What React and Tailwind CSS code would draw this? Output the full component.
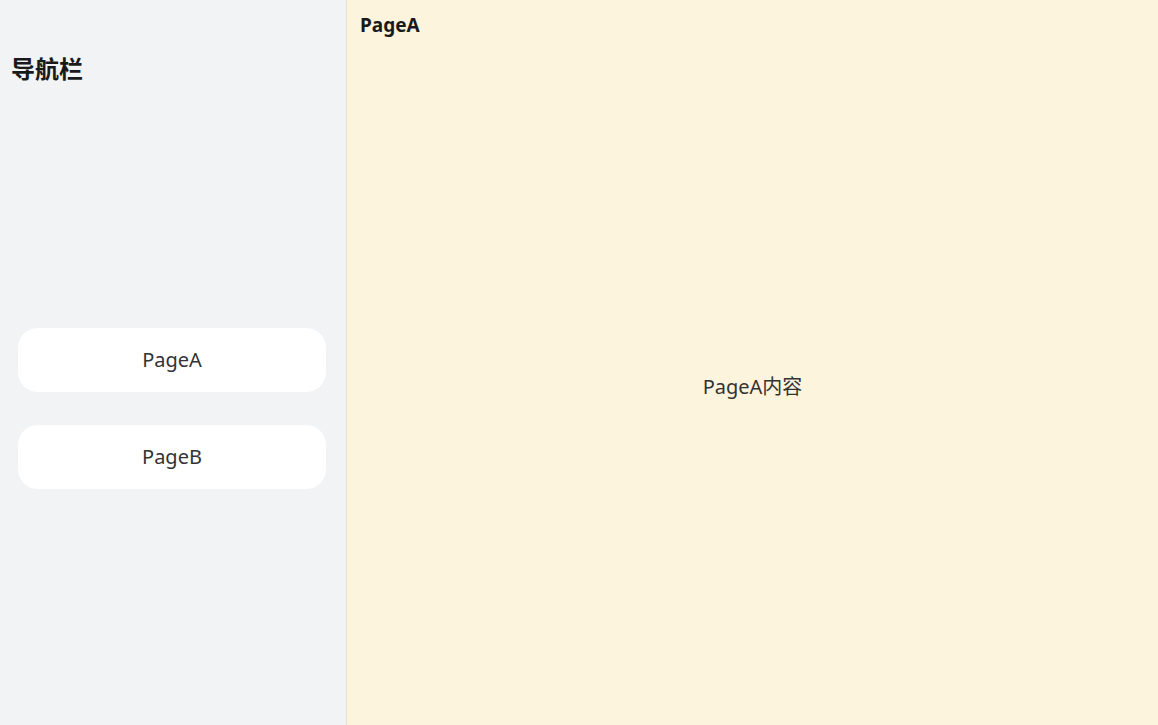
export default function App() {
  const font = { fontFamily: '"Noto Sans", "Noto Sans CJK SC", sans-serif' };
  return (
    <div className="flex h-[725px] w-[1158px] overflow-hidden" style={font}>
      <aside className="flex w-[347px] shrink-0 flex-col border-r border-[#e6e2d6] bg-[#f1f3f5]">
        <div className="h-[92px] px-[11px] pt-[55px]">
          <h1 className="text-[24px] font-bold leading-[28px] text-[#1a1a1a]">导航栏</h1>
        </div>
        <div className="flex flex-1 flex-col justify-center gap-[33px] px-[18px] pr-[20px]">
          <button className="h-[64px] rounded-[20px] bg-white text-[20px] text-[#333333]">PageA</button>
          <button className="h-[64px] rounded-[20px] bg-white text-[20px] text-[#333333]">PageB</button>
        </div>
      </aside>
      <main className="flex flex-1 flex-col bg-[#fdf4de]">
        <div className="h-[48px] px-[13px] pt-[12px]">
          <h2 className="text-[19px] font-bold leading-[26px] text-[#1a1a1a]">PageA</h2>
        </div>
        <div className="flex flex-1 items-center justify-center">
          <p className="text-[20px] text-[#333333]">PageA内容</p>
        </div>
      </main>
    </div>
  );
}
